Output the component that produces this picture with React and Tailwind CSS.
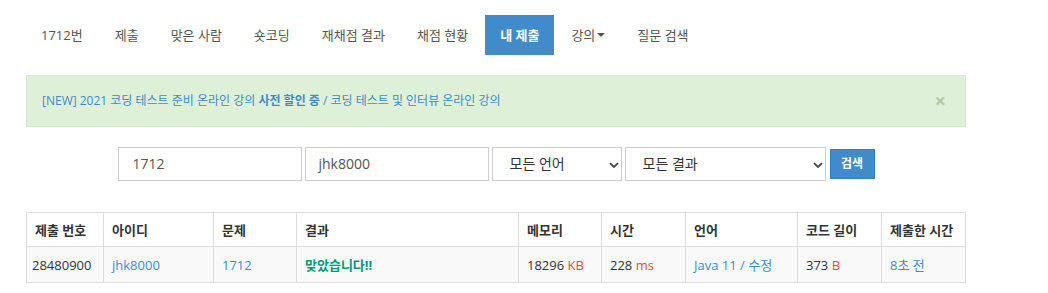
import React from "react";

const navItems = ["1712번", "제출", "맞은 사람", "숏코딩", "재채점 결과", "채점 현황"];

const Chevron = () => (
  <svg width="10" height="7" viewBox="0 0 10 7" className="absolute right-[2px] top-[14px]">
    <path d="M1 1.2 L5 5 L9 1.2" fill="none" stroke="#444" strokeWidth="1.8" />
  </svg>
);

const App = () => {
  return (
    <div
      className="w-[1048px] h-[293px] bg-white text-[14px] leading-[20px] text-[#333]"
      style={{ fontFamily: '"Open Sans", "Noto Sans CJK KR", sans-serif' }}
    >
      <div className="ml-[26px] w-[940px] pt-[15px]">
        {/* Nav pills */}
        <ul className="flex gap-[2px] text-[13px]">
          {navItems.map((item) => (
            <li key={item} className="px-[15px] py-[10px] text-[#555]">
              {item}
            </li>
          ))}
          <li className="px-[15px] py-[10px] bg-[#428bca] text-white font-bold">내 제출</li>
          <li className="px-[15px] py-[10px] text-[#555] flex items-center">
            강의
            <span className="ml-[2px] inline-block w-0 h-0 border-l-[4px] border-r-[4px] border-t-[4px] border-l-transparent border-r-transparent border-t-[#555]" />
          </li>
          <li className="px-[15px] py-[10px] text-[#555]">질문 검색</li>
        </ul>

        {/* Alert */}
        <div className="mt-[20px] flex items-center justify-between bg-[#dff0d8] border border-[#d6e9c6] pl-[15px] pr-[15px] py-[15px]">
          <span className="text-[#428bca] text-[12px]">
            [NEW] 2021 코딩 테스트 준비 온라인 강의 <b>사전 할인 중</b> / 코딩 테스트 및 인터뷰 온라인 강의
          </span>
          <span className="text-[#b4c9ab] text-[20px] font-bold leading-[20px] mr-[4px]">×</span>
        </div>

        {/* Search form */}
        <div className="mt-[20px] flex justify-center items-center gap-[3px]">
          <div className="w-[184px] h-[34px] border border-[#ccc] px-[14px] flex items-center text-[#555]">1712</div>
          <div className="w-[184px] h-[34px] border border-[#ccc] px-[13px] flex items-center text-[#555]">jhk8000</div>
          <div className="relative w-[130px] h-[34px] border border-[#ccc] pl-[17px] flex items-center text-[#333]">
            모든 언어
            <Chevron />
          </div>
          <div className="relative w-[201px] h-[34px] border border-[#ccc] pl-[17px] flex items-center text-[#333]">
            모든 결과
            <Chevron />
          </div>
          <div className="ml-[1px] w-[45px] h-[30px] bg-[#428bca] border border-[#357ebd] text-white text-[12px] font-bold flex items-center justify-center">
            검색
          </div>
        </div>

        {/* Table */}
        <table className="mt-[31px] w-[940px] border-collapse border border-[#ddd] text-[13px]">
          <thead>
            <tr className="h-[34px] text-left">
              <th className="w-[77px] border border-[#ddd] px-[8px] font-bold">제출 번호</th>
              <th className="w-[110px] border border-[#ddd] px-[8px] font-bold">아이디</th>
              <th className="w-[83px] border border-[#ddd] px-[8px] font-bold">문제</th>
              <th className="w-[222px] border border-[#ddd] px-[8px] font-bold">결과</th>
              <th className="w-[83px] border border-[#ddd] px-[8px] font-bold">메모리</th>
              <th className="w-[84px] border border-[#ddd] px-[8px] font-bold">시간</th>
              <th className="w-[112px] border border-[#ddd] px-[8px] font-bold">언어</th>
              <th className="w-[84px] border border-[#ddd] px-[8px] font-bold">코드 길이</th>
              <th className="border border-[#ddd] px-[8px] font-bold">제출한 시간</th>
            </tr>
          </thead>
          <tbody>
            <tr className="h-[36px] bg-[#f9f9f9]">
              <td className="border border-[#ddd] px-[5px]">28480900</td>
              <td className="border border-[#ddd] px-[8px] text-[#428bca]">jhk8000</td>
              <td className="border border-[#ddd] px-[8px] text-[#428bca]">1712</td>
              <td className="border border-[#ddd] px-[8px] text-[#009874] font-bold">맞았습니다!!</td>
              <td className="border border-[#ddd] px-[8px]">
                18296 <span className="text-[#e74c3c]">KB</span>
              </td>
              <td className="border border-[#ddd] px-[8px]">
                228 <span className="text-[#e74c3c]">ms</span>
              </td>
              <td className="border border-[#ddd] px-[8px] text-[#428bca]">Java 11 / 수정</td>
              <td className="border border-[#ddd] px-[8px]">
                373 <span className="text-[#e74c3c]">B</span>
              </td>
              <td className="border border-[#ddd] px-[8px] text-[#428bca]">8초 전</td>
            </tr>
          </tbody>
        </table>
      </div>
    </div>
  );
};

export default App;
